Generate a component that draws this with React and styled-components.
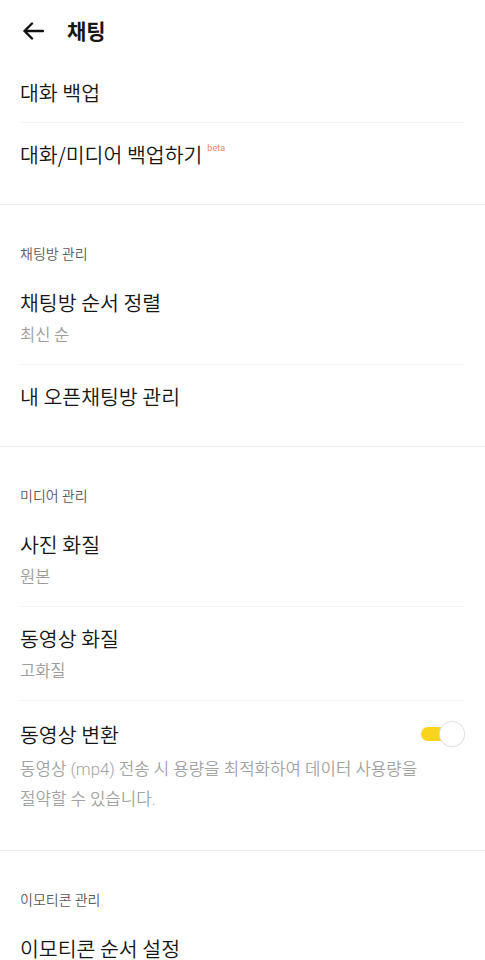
import React, {useState} from 'react'
import styled, {createGlobalStyle} from 'styled-components'

const Global = createGlobalStyle`
    html, body {
        margin: 0;
        padding: 0;
        background: #fff;
    }
    body {
        font-family: "Noto Sans CJK KR", "Noto Sans", sans-serif;
        color: #161616;
    }
`

const Page = styled.div`
    width: 100%;
    height: 100vh;
    overflow: hidden;
    background: #fff;
`

const Header = styled.header`
    height: 61px;
    display: flex;
    align-items: center;
    padding: 0 0 0 20px;
    gap: 21px;

    h1 {
        margin: 0;
        font-size: 21px;
        font-weight: 700;
        line-height: 1;
    }
`

const BackButton = styled.button`
    border: none;
    background: none;
    padding: 0;
    width: 26px;
    height: 26px;
    display: flex;
    align-items: center;
    justify-content: center;
    cursor: pointer;
`

const Section = styled.section`
    padding-bottom: 20px;
    border-bottom: ${p => p.$last ? 'none' : '1px solid #ebebeb'};
`

const Label = styled.div`
    padding: 38px 20px 8px;
    font-size: 14px;
    font-weight: 350;
    line-height: 20px;
    color: #5c5c5c;
`

const Row = styled.div`
    margin: 0 20px;
    padding: ${p => p.$top || 17}px 0 16px;
    border-bottom: ${p => p.$divider ? '1px solid #f4f4f4' : 'none'};
    display: flex;
    flex-direction: column;
`

const RowHead = styled.div`
    display: flex;
    align-items: center;
    justify-content: space-between;
    gap: 16px;
`

const Title = styled.div`
    font-size: 20.5px;
    font-weight: 350;
    line-height: 28px;
    color: #161616;

    sup {
        font-family: "Roboto", sans-serif;
        font-size: 9px;
        font-weight: 400;
        color: #e8875a;
        margin-left: 5px;
        vertical-align: 12px;
        line-height: 0;
    }
`

const Sub = styled.div`
    margin-top: 4px;
    font-size: 16.5px;
    font-weight: 350;
    line-height: 28px;
    color: #9d9d9d;
`

const Desc = styled.div`
    margin-top: 6px;
    padding-right: 20px;
    font-family: "Roboto", "Noto Sans CJK KR", sans-serif;
    font-size: 16.8px;
    font-weight: 350;
    line-height: 30px;
    color: #a3a3a3;
    word-break: keep-all;
`

const Toggle = styled.button`
    position: relative;
    flex: none;
    width: 45px;
    height: 28px;
    border: none;
    background: none;
    padding: 0;
    cursor: pointer;

    &::before {
        content: '';
        position: absolute;
        left: 1px;
        top: 7px;
        width: 34px;
        height: 14px;
        border-radius: 7px;
        background: ${p => p.$on ? '#f8d51c' : '#d8d8d8'};
    }

    &::after {
        content: '';
        position: absolute;
        top: 2px;
        left: ${p => p.$on ? '20px' : '0'};
        width: 24px;
        height: 24px;
        border-radius: 50%;
        background: #fff;
        box-shadow: 0 0 0 1px #e2e2e2, 0 1px 2px rgba(0,0,0,0.08);
    }
`

const Item = ({title, sub, beta, divider}) => (
    <Row $divider={divider}>
        <Title>{title}{beta && <sup>beta</sup>}</Title>
        {sub && <Sub>{sub}</Sub>}
    </Row>
)

const App = () => {
    const [convert, setConvert] = useState(true)

    return(
        <Page>
            <Global />
            <Header>
                <BackButton aria-label="back">
                    <svg width="22" height="18" viewBox="0 0 22 18" fill="none">
                        <path d="M21 9H2.5M10 1.5L2.5 9l7.5 7.5" stroke="#111" strokeWidth="2.4" strokeLinecap="round" strokeLinejoin="round" />
                    </svg>
                </BackButton>
                <h1>채팅</h1>
            </Header>

            <Section>
                <Item title="대화 백업" divider />
                <Item title="대화/미디어 백업하기" beta />
            </Section>

            <Section>
                <Label>채팅방 관리</Label>
                <Item title="채팅방 순서 정렬" sub="최신 순" divider />
                <Item title="내 오픈채팅방 관리" />
            </Section>

            <Section>
                <Label>미디어 관리</Label>
                <Item title="사진 화질" sub="원본" divider />
                <Item title="동영상 화질" sub="고화질" divider />
                <Row $top={19}>
                    <RowHead>
                        <Title>동영상 변환</Title>
                        <Toggle $on={convert} onClick={() => setConvert(!convert)} aria-label="toggle" />
                    </RowHead>
                    <Desc>동영상 (mp4) 전송 시 용량을 최적화하여 데이터 사용량을 절약할 수 있습니다.</Desc>
                </Row>
            </Section>

            <Section $last>
                <Label>이모티콘 관리</Label>
                <Item title="이모티콘 순서 설정" />
            </Section>
        </Page>
    )
}

export default App
